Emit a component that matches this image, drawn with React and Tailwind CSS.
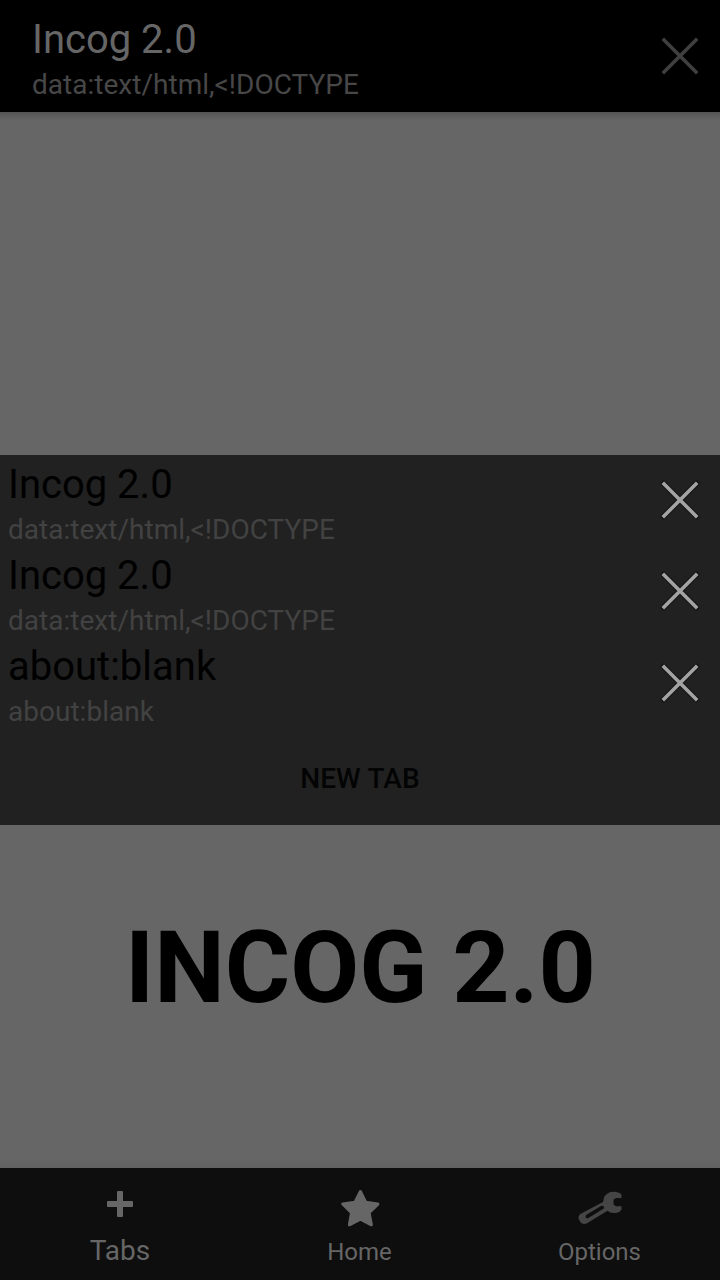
import React from "react";

function CloseIcon({ className, halo }) {
  return (
    <svg className={className} width="48" height="48" viewBox="0 0 48 48" fill="none">
      {halo && (
        <path d="M7.500 7.500 40.500 40.500M40.500 7.500 7.500 40.500" stroke="#161616" strokeWidth="6" strokeLinecap="round" />
      )}
      <path d="M6.8 6.8 41.2 41.2M41.2 6.8 6.8 41.2" stroke="currentColor" strokeWidth="3.6" />
    </svg>
  );
}

const tabs = [
  { title: "Incog 2.0", url: "data:text/html,<!DOCTYPE", iconClass: "mb-0.5 text-[#a3a3a3]" },
  { title: "Incog 2.0", url: "data:text/html,<!DOCTYPE", iconClass: "mb-0.5 text-[#a3a3a3]" },
  { title: "about:blank", url: "about:blank", iconClass: "text-[#a3a3a3]" },
];

function TabRow({ title, url, iconClass }) {
  return (
    <li className="flex h-[91px] items-center justify-between pr-4 pl-2">
      <div className="flex flex-col gap-[5px] pt-1.5">
        <span className="text-[40px] leading-[47px] text-black">{title}</span>
        <span className="text-[28px] leading-[33px] tracking-[0.02px] text-[#424242]">{url}</span>
      </div>
      <CloseIcon className={iconClass} halo />
    </li>
  );
}

export default function App() {
  return (
    <div className="relative flex h-[1280px] w-[720px] flex-col overflow-hidden bg-[#666666] font-['Roboto',sans-serif]">
      <header className="flex h-28 shrink-0 justify-between bg-black pt-4 pr-4 pl-8">
        <div className="flex flex-col gap-[5px]">
          <span className="text-[40px] leading-[47px] text-[#666666]">Incog 2.0</span>
          <span className="text-[28px] leading-[33px] tracking-[0.02px] text-[#474747]">data:text/html,&lt;!DOCTYPE</span>
        </div>
        <CloseIcon className="mt-4 text-[#3f3f3f]" />
      </header>

      <main className="flex grow flex-col items-center">
        <div className="h-2 w-full bg-linear-to-b from-[#545454] to-[#666666]" />
        <h1 className="mt-[798px] pl-px text-[100px] leading-[100px] font-bold whitespace-nowrap text-black">INCOG 2.0</h1>
        <div className="mt-auto h-2 w-full bg-linear-to-b from-[#666666] to-[#616161]" />
      </main>

      <nav className="grid h-28 shrink-0 grid-cols-3 bg-[#0e0e0e] text-[#666666]">
        <button className="flex flex-col items-center pt-4">
          <svg width="40" height="40" viewBox="0 0 40 40" fill="currentColor">
            <path d="M18 7h4q1 0 1 1v9h9q1 0 1 1v4q0 1-1 1h-9v9q0 1-1 1h-4q-1 0-1-1v-9H8q-1 0-1-1v-4q0-1 1-1h9V8q0-1 1-1Z" />
          </svg>
          <span className="mt-[10px] text-[28px] leading-[33px]">Tabs</span>
        </button>
        <button className="flex flex-col items-center pt-4">
          <svg width="48" height="48" viewBox="0 0 48 48" fill="currentColor" stroke="currentColor" strokeWidth="3" strokeLinejoin="round">
            <path d="m24.400 7.500 5.300 10.700 12.200 1.900-8.800 8.700 2.300 12-11-5.600-11 5.600 2.100-12-8.800-8.900 12.300-1.700Z" />
          </svg>
          <span className="mt-1 mr-px text-2xl leading-8">Home</span>
        </button>
        <button className="flex flex-col items-center pt-4">
          <svg width="48" height="48" viewBox="0 0 48 48" fill="none">
            <path
              fill="#454545"
              fillRule="evenodd"
              d="M45.500 10.500v3.500h-5.500l-2.500 1.800v4.700l2.500 1.700h5.500v3.300q-1.500 3-4.700 3.300-6.300 1-9.300-2L11 39.200q-4 2-6.500-1l-1.700-3q-1-3.700 2-5.500L27 18q.8-8 7.500-10 7.500-1 11 2.500ZM10 31 25 22q3-.8 3.200 2.300L12 34.300q-3.200.5-2-3.300Z"
            />
          </svg>
          <span className="mt-1 mr-px text-2xl leading-8">Options</span>
        </button>
      </nav>

      <section className="absolute top-[455px] left-0 flex h-[370px] w-full flex-col bg-[#212121]">
        <ul>
          {tabs.map((tab, i) => (
            <TabRow key={i} {...tab} />
          ))}
        </ul>
        <button className="grow pt-1 text-[28px] leading-[33px] font-medium tracking-[0.15px] text-[#040404]">NEW TAB</button>
      </section>
    </div>
  );
}
